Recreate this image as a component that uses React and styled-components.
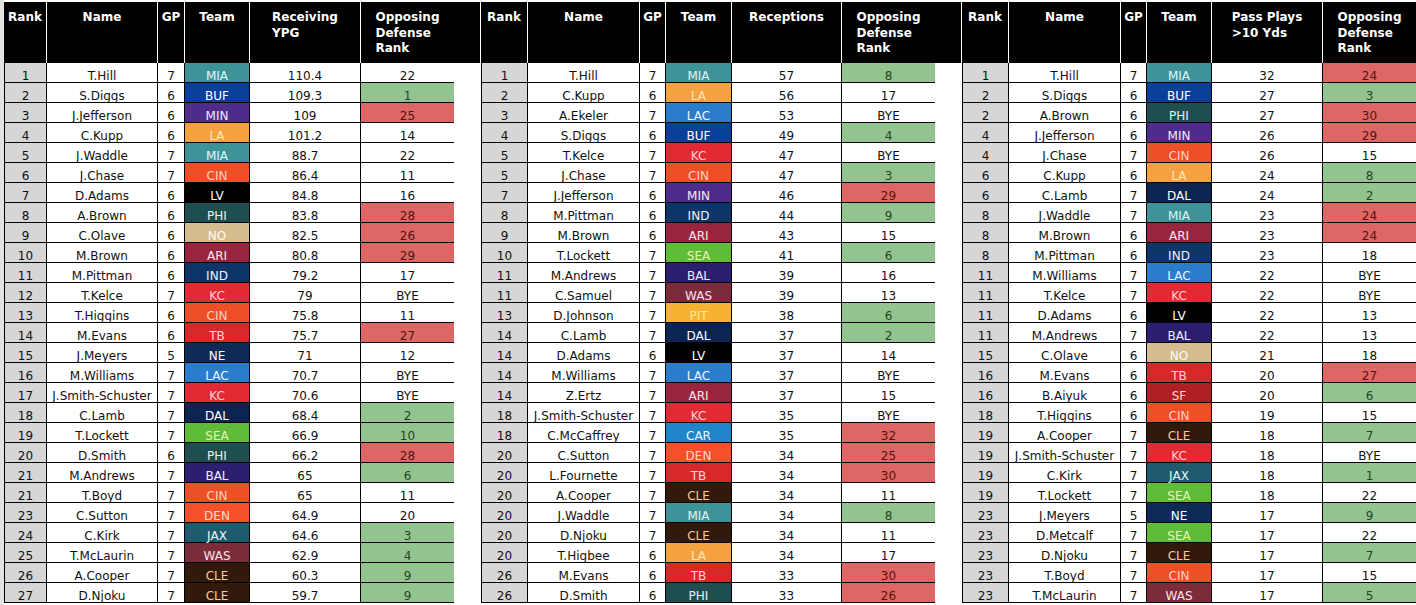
import styled, { createGlobalStyle } from "styled-components";

const GlobalStyle = createGlobalStyle`
  html, body {
    margin: 0;
    padding: 0;
    background: #fff;
    overflow: hidden;
  }
  body {
    font-family: "DejaVu Sans", Verdana, sans-serif;
  }
`;

const teams = {
  MIA: ["#3d9397", "#e2f6f6"],
  BUF: ["#0c3f97", "#ffffff"],
  MIN: ["#4f2b8c", "#f3ecff"],
  LA: ["#f3a23f", "#fde7c2"],
  CIN: ["#ef4f26", "#fed2c0"],
  LV: ["#000000", "#ffffff"],
  PHI: ["#1f4e50", "#e6f3f3"],
  NO: ["#d4bc8f", "#fffaf0"],
  ARI: ["#98243f", "#fde9ee"],
  IND: ["#0e3567", "#eaf2ff"],
  KC: ["#e32a34", "#fdd3d3"],
  TB: ["#d9282a", "#fdd8d6"],
  NE: ["#0c2b57", "#ffffff"],
  LAC: ["#2a7dcb", "#eef6ff"],
  DAL: ["#0b2550", "#ffffff"],
  SEA: ["#5fbb38", "#e5f6b8"],
  BAL: ["#2c1f70", "#f1edff"],
  WAS: ["#7c2b3b", "#fbe3e8"],
  PIT: ["#f6b230", "#fde4a4"],
  CLE: ["#311a0b", "#f7cb9e"],
  JAX: ["#1e5b6f", "#eaf7fb"],
  DEN: ["#f5502a", "#fed7c5"],
  SF: ["#b01f24", "#fdd8cf"],
  CAR: ["#1e86c8", "#eef8ff"],
};

const receiving = [
  ["1", "T.Hill", 7, "MIA", "110.4", "22"],
  ["2", "S.Diggs", 6, "BUF", "109.3", "1"],
  ["3", "J.Jefferson", 6, "MIN", "109", "25"],
  ["4", "C.Kupp", 6, "LA", "101.2", "14"],
  ["5", "J.Waddle", 7, "MIA", "88.7", "22"],
  ["6", "J.Chase", 7, "CIN", "86.4", "11"],
  ["7", "D.Adams", 6, "LV", "84.8", "16"],
  ["8", "A.Brown", 6, "PHI", "83.8", "28"],
  ["9", "C.Olave", 6, "NO", "82.5", "26"],
  ["10", "M.Brown", 6, "ARI", "80.8", "29"],
  ["11", "M.Pittman", 6, "IND", "79.2", "17"],
  ["12", "T.Kelce", 7, "KC", "79", "BYE"],
  ["13", "T.Higgins", 6, "CIN", "75.8", "11"],
  ["14", "M.Evans", 6, "TB", "75.7", "27"],
  ["15", "J.Meyers", 5, "NE", "71", "12"],
  ["16", "M.Williams", 7, "LAC", "70.7", "BYE"],
  ["17", "J.Smith-Schuster", 7, "KC", "70.6", "BYE"],
  ["18", "C.Lamb", 7, "DAL", "68.4", "2"],
  ["19", "T.Lockett", 7, "SEA", "66.9", "10"],
  ["20", "D.Smith", 6, "PHI", "66.2", "28"],
  ["21", "M.Andrews", 7, "BAL", "65", "6"],
  ["21", "T.Boyd", 7, "CIN", "65", "11"],
  ["23", "C.Sutton", 7, "DEN", "64.9", "20"],
  ["24", "C.Kirk", 7, "JAX", "64.6", "3"],
  ["25", "T.McLaurin", 7, "WAS", "62.9", "4"],
  ["26", "A.Cooper", 7, "CLE", "60.3", "9"],
  ["27", "D.Njoku", 7, "CLE", "59.7", "9"],
];

const receptions = [
  ["1", "T.Hill", 7, "MIA", "57", "8"],
  ["2", "C.Kupp", 6, "LA", "56", "17"],
  ["3", "A.Ekeler", 7, "LAC", "53", "BYE"],
  ["4", "S.Diggs", 6, "BUF", "49", "4"],
  ["5", "T.Kelce", 7, "KC", "47", "BYE"],
  ["5", "J.Chase", 7, "CIN", "47", "3"],
  ["7", "J.Jefferson", 6, "MIN", "46", "29"],
  ["8", "M.Pittman", 6, "IND", "44", "9"],
  ["9", "M.Brown", 6, "ARI", "43", "15"],
  ["10", "T.Lockett", 7, "SEA", "41", "6"],
  ["11", "M.Andrews", 7, "BAL", "39", "16"],
  ["11", "C.Samuel", 7, "WAS", "39", "13"],
  ["13", "D.Johnson", 7, "PIT", "38", "6"],
  ["14", "C.Lamb", 7, "DAL", "37", "2"],
  ["14", "D.Adams", 6, "LV", "37", "14"],
  ["14", "M.Williams", 7, "LAC", "37", "BYE"],
  ["14", "Z.Ertz", 7, "ARI", "37", "15"],
  ["18", "J.Smith-Schuster", 7, "KC", "35", "BYE"],
  ["18", "C.McCaffrey", 7, "CAR", "35", "32"],
  ["20", "C.Sutton", 7, "DEN", "34", "25"],
  ["20", "L.Fournette", 7, "TB", "34", "30"],
  ["20", "A.Cooper", 7, "CLE", "34", "11"],
  ["20", "J.Waddle", 7, "MIA", "34", "8"],
  ["20", "D.Njoku", 7, "CLE", "34", "11"],
  ["20", "T.Higbee", 6, "LA", "34", "17"],
  ["26", "M.Evans", 6, "TB", "33", "30"],
  ["26", "D.Smith", 6, "PHI", "33", "26"],
];

const bigPlays = [
  ["1", "T.Hill", 7, "MIA", "32", "24"],
  ["2", "S.Diggs", 6, "BUF", "27", "3"],
  ["2", "A.Brown", 6, "PHI", "27", "30"],
  ["4", "J.Jefferson", 6, "MIN", "26", "29"],
  ["4", "J.Chase", 7, "CIN", "26", "15"],
  ["6", "C.Kupp", 6, "LA", "24", "8"],
  ["6", "C.Lamb", 7, "DAL", "24", "2"],
  ["8", "J.Waddle", 7, "MIA", "23", "24"],
  ["8", "M.Brown", 6, "ARI", "23", "24"],
  ["8", "M.Pittman", 6, "IND", "23", "18"],
  ["11", "M.Williams", 7, "LAC", "22", "BYE"],
  ["11", "T.Kelce", 7, "KC", "22", "BYE"],
  ["11", "D.Adams", 6, "LV", "22", "13"],
  ["11", "M.Andrews", 7, "BAL", "22", "13"],
  ["15", "C.Olave", 6, "NO", "21", "18"],
  ["16", "M.Evans", 6, "TB", "20", "27"],
  ["16", "B.Aiyuk", 6, "SF", "20", "6"],
  ["18", "T.Higgins", 6, "CIN", "19", "15"],
  ["19", "A.Cooper", 7, "CLE", "18", "7"],
  ["19", "J.Smith-Schuster", 7, "KC", "18", "BYE"],
  ["19", "C.Kirk", 7, "JAX", "18", "1"],
  ["19", "T.Lockett", 7, "SEA", "18", "22"],
  ["23", "J.Meyers", 5, "NE", "17", "9"],
  ["23", "D.Metcalf", 7, "SEA", "17", "22"],
  ["23", "D.Njoku", 7, "CLE", "17", "7"],
  ["23", "T.Boyd", 7, "CIN", "17", "15"],
  ["23", "T.McLaurin", 7, "WAS", "17", "5"],
];

const tables = [
  {
    cols: "43px 111px 27px 65px 111px 93px",
    stat: ["Receiving", "YPG"],
    rows: receiving,
  },
  {
    cols: "47px 112px 26px 66px 110px 93px",
    stat: ["Receptions"],
    rows: receptions,
  },
  {
    cols: "47px 112px 26px 65px 111px 93px",
    stat: ["Pass Plays", ">10 Yds"],
    rows: bigPlays,
  },
];

// green for tough defenses, red for soft ones
const rankTone = (value) => {
  const n = Number(value);
  if (Number.isNaN(n)) return null;
  if (n <= 10) return "good";
  if (n >= 24) return "bad";
  return null;
};

const App = () => {
  return (
    <>
      <GlobalStyle />
      <Sheet>
        <Stripe />
        {tables.map((t, i) => (
          <Group key={i}>
            {i > 0 && <Spacer />}
            <StatTable rows={t.rows} cols={t.cols} stat={t.stat} />
          </Group>
        ))}
      </Sheet>
    </>
  );
};

const StatTable = ({ rows, cols, stat }) => (
  <Table $cols={cols}>
    <HeadCell>
      <HeadText>Rank</HeadText>
    </HeadCell>
    <HeadCell>
      <HeadText>Name</HeadText>
    </HeadCell>
    <HeadCell>
      <HeadText>GP</HeadText>
    </HeadCell>
    <HeadCell>
      <HeadText>Team</HeadText>
    </HeadCell>
    <HeadCell>
      <HeadText>
        {stat.map((line) => (
          <div key={line}>{line}</div>
        ))}
      </HeadText>
    </HeadCell>
    <HeadCell $last>
      <HeadText>
        <div>Opposing</div>
        <div>Defense</div>
        <div>Rank</div>
      </HeadText>
    </HeadCell>
    {rows.map(([rank, name, gp, team, value, opp], r) => (
      <Row key={r}>
        <RankCell>{rank}</RankCell>
        <Cell>{name}</Cell>
        <Cell>{gp}</Cell>
        <TeamCell $bg={teams[team][0]} $fg={teams[team][1]}>
          {team}
        </TeamCell>
        <Cell>{value}</Cell>
        <OppCell $tone={rankTone(opp)}>{opp}</OppCell>
      </Row>
    ))}
  </Table>
);

const Sheet = styled.div`
  display: flex;
  width: 1416px;
  height: 605px;
  padding-top: 2px;
  box-sizing: border-box;
  background: #fff;
  overflow: hidden;
`;

const Stripe = styled.div`
  width: 4px;
  margin-top: -2px;
  background: #e3e3e3;
  flex: none;
`;

const Group = styled.div`
  display: flex;
  flex: none;
`;

const Spacer = styled.div`
  width: 27px;
  flex: none;
  height: 61px;
  background: #000;
  border-right: 1px solid #fff;
  box-sizing: border-box;
`;

const Table = styled.div`
  display: grid;
  grid-template-columns: ${(p) => p.$cols};
  grid-template-rows: 61px;
  grid-auto-rows: 20px;
  align-content: start;
`;

const Row = styled.div`
  display: contents;
`;

const HeadCell = styled.div`
  background: #000;
  color: #fff;
  border-right: ${(p) => (p.$last ? "none" : "1px solid #fff")};
  box-sizing: border-box;
  display: flex;
  justify-content: center;
  align-items: flex-start;
  padding-top: 8px;
`;

const HeadText = styled.div`
  font-weight: bold;
  font-size: 12px;
  line-height: 15.5px;
  text-align: left;
  white-space: nowrap;
`;

const Cell = styled.div`
  box-sizing: border-box;
  border-right: 1px solid #000;
  border-bottom: 1px solid #000;
  font-size: 12px;
  line-height: 14px;
  color: #111;
  display: flex;
  align-items: center;
  justify-content: center;
  white-space: nowrap;
  padding-top: 6px;
`;

const RankCell = styled(Cell)`
  background: #d6d6d6;
  border-left: 1px solid #000;
`;

const TeamCell = styled(Cell)`
  background: ${(p) => p.$bg};
  color: ${(p) => p.$fg};
`;

const OppCell = styled(Cell)`
  border-right: none;
  background: ${(p) =>
    p.$tone === "good" ? "#93c490" : p.$tone === "bad" ? "#dc6764" : "#fff"};
  color: ${(p) =>
    p.$tone === "good" ? "#234523" : p.$tone === "bad" ? "#571212" : "#111"};
`;

export default App;
